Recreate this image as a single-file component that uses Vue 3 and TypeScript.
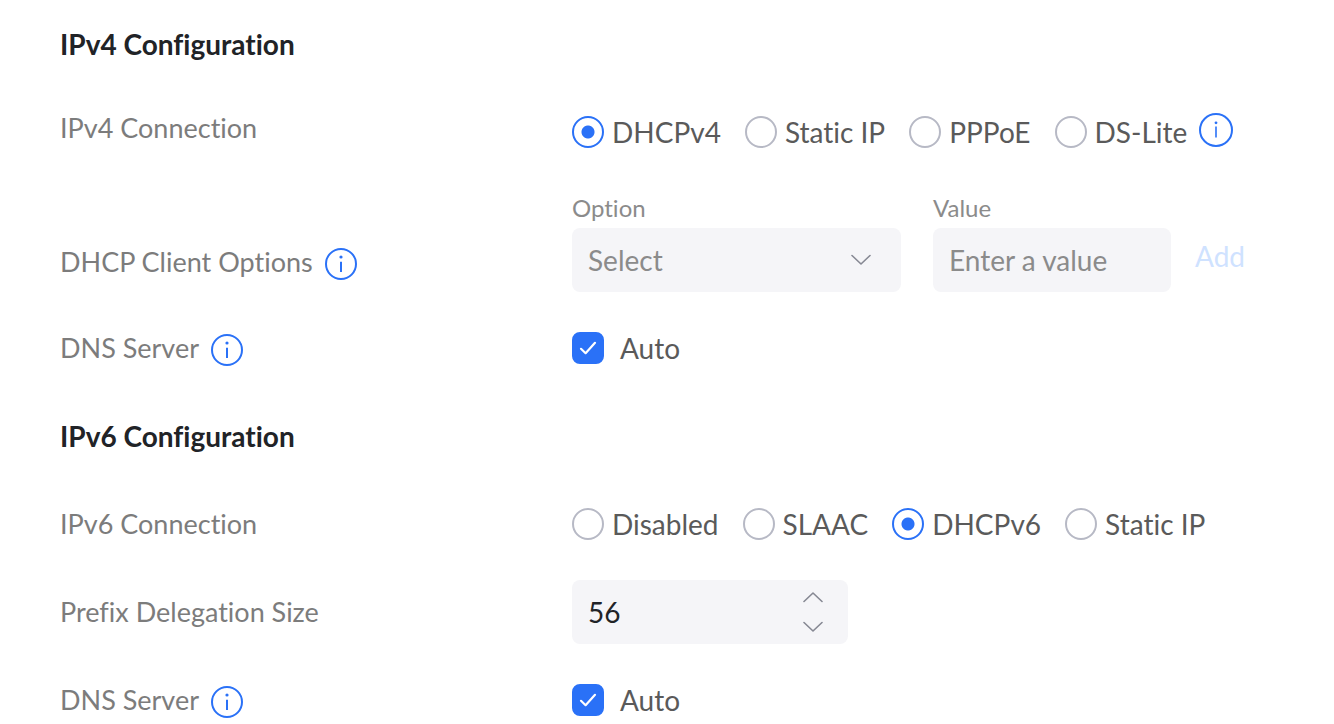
<script setup lang="ts">
import { ref } from 'vue'

const v4Modes: string[] = ['DHCPv4', 'Static IP', 'PPPoE', 'DS-Lite']
const v6Modes: string[] = ['Disabled', 'SLAAC', 'DHCPv6', 'Static IP']

const v4Mode = ref('DHCPv4')
const v6Mode = ref('DHCPv6')
const v4AutoDns = ref(true)
const v6AutoDns = ref(true)
const option = ref('')
const optionValue = ref('')
const prefixSize = ref(56)

function step(amount: number): void {
  prefixSize.value = Math.min(64, Math.max(48, prefixSize.value + amount))
}
</script>

<template>
  <form class="page" @submit.prevent>
    <section class="section">
      <h2 class="title">IPv4 Configuration</h2>

      <div class="row" role="radiogroup" aria-labelledby="v4-connection">
        <span id="v4-connection" class="label raised">IPv4 Connection</span>
        <div class="choices">
          <label v-for="mode in v4Modes" :key="mode" class="choice">
            <input v-model="v4Mode" class="radio" type="radio" name="v4" :value="mode" />
            {{ mode }}
          </label>
          <button class="info info-large" type="button" aria-label="About DS-Lite">
            <svg viewBox="0 0 34 34" aria-hidden="true">
              <circle cx="17" cy="17" r="16" />
              <path class="thin" d="M17 13.5V24.5" />
              <circle class="dot" cx="17" cy="9.8" r="1.4" />
            </svg>
          </button>
        </div>
      </div>

      <div class="row row-options">
        <div class="label label-options">
          <span>DHCP Client Options</span>
          <button class="info" type="button" aria-label="About DHCP client options">
            <svg viewBox="0 0 32 32" aria-hidden="true">
              <circle cx="16" cy="16" r="15" />
              <path d="M16 13.8V24" />
              <circle class="dot" cx="16" cy="9" r="1.6" />
            </svg>
          </button>
        </div>
        <div class="options">
          <div class="option-field">
            <label class="caption" for="option">Option</label>
            <div class="stack">
              <select id="option" v-model="option" class="field select">
                <option value="">Select</option>
                <option value="60">60</option>
                <option value="61">61</option>
              </select>
              <svg class="chevron" viewBox="0 0 20 12" aria-hidden="true">
                <path d="M1 1.5L10 10L19 1.5" />
              </svg>
            </div>
          </div>
          <div class="value-field">
            <label class="caption" for="value">Value</label>
            <input id="value" v-model="optionValue" class="field" type="text" placeholder="Enter a value" />
          </div>
          <button class="add" type="button" disabled>Add</button>
        </div>
      </div>

      <div class="row row-dns">
        <div class="label">
          <span>DNS Server</span>
          <button class="info" type="button" aria-label="About the IPv4 DNS server">
            <svg viewBox="0 0 32 32" aria-hidden="true">
              <circle cx="16" cy="16" r="15" />
              <path d="M16 13.8V24" />
              <circle class="dot" cx="16" cy="9" r="1.6" />
            </svg>
          </button>
        </div>
        <label class="check">
          <span class="stack">
            <input v-model="v4AutoDns" class="box" type="checkbox" />
            <svg v-if="v4AutoDns" class="tick" viewBox="0 0 32 32" aria-hidden="true">
              <path d="M9 16.8L13.6 21.2L23 10.8" />
            </svg>
          </span>
          Auto
        </label>
      </div>
    </section>

    <section class="section">
      <h2 class="title">IPv6 Configuration</h2>

      <div class="row" role="radiogroup" aria-labelledby="v6-connection">
        <span id="v6-connection" class="label">IPv6 Connection</span>
        <div class="choices">
          <label v-for="mode in v6Modes" :key="mode" class="choice">
            <input v-model="v6Mode" class="radio" type="radio" name="v6" :value="mode" />
            {{ mode }}
          </label>
        </div>
      </div>

      <div class="row row-prefix">
        <label class="label" for="prefix">Prefix Delegation Size</label>
        <div class="stack number">
          <input id="prefix" v-model.number="prefixSize" class="field" type="number" min="48" max="64" />
          <div class="steppers">
            <button type="button" aria-label="Increase" @click="step(1)">
              <svg viewBox="0 0 20 12" aria-hidden="true"><path d="M1 10.5L10 2L19 10.5" /></svg>
            </button>
            <button type="button" aria-label="Decrease" @click="step(-1)">
              <svg viewBox="0 0 20 12" aria-hidden="true"><path d="M1 1.5L10 10L19 1.5" /></svg>
            </button>
          </div>
        </div>
      </div>

      <div class="row row-dns">
        <div class="label">
          <span>DNS Server</span>
          <button class="info" type="button" aria-label="About the IPv6 DNS server">
            <svg viewBox="0 0 32 32" aria-hidden="true">
              <circle cx="16" cy="16" r="15" />
              <path d="M16 13.8V24" />
              <circle class="dot" cx="16" cy="9" r="1.6" />
            </svg>
          </button>
        </div>
        <label class="check">
          <span class="stack">
            <input v-model="v6AutoDns" class="box" type="checkbox" />
            <svg v-if="v6AutoDns" class="tick" viewBox="0 0 32 32" aria-hidden="true">
              <path d="M9 16.8L13.6 21.2L23 10.8" />
            </svg>
          </span>
          Auto
        </label>
      </div>
    </section>
  </form>
</template>

<style>
body {
  margin: 0;
  background: #fff;
}
</style>

<style scoped>
.page {
  display: flex;
  flex-direction: column;
  gap: 54px;
  padding: 28px 60px 6px;
  color: #5a5a5a;
  font-family: Lato, "Open Sans", sans-serif;
  font-size: 28px;
  font-variant-ligatures: none;
  line-height: 32px;
}
.page * {
  box-sizing: border-box;
}
.title {
  margin: 0 0 56px;
  color: #212327;
  font-size: 28px;
  font-weight: 700;
  line-height: 32px;
}
.row {
  display: grid;
  grid-template-columns: 512px minmax(0, 1fr);
  align-items: center;
}
.row-options {
  margin-top: 48px;
}
.row-dns,
.row-prefix {
  margin-top: 40px;
}
.row-dns {
  align-items: start;
}
.label {
  display: flex;
  align-items: flex-start;
  gap: 12px;
  color: #7c7c7c;
  font-size: 27px;
}
.raised {
  align-self: start;
  line-height: 24px;
}
.label-options {
  align-self: end;
  padding-bottom: 12px;
}
.choices {
  display: flex;
  align-items: center;
  height: 32px;
  white-space: nowrap;
}
.choice {
  display: flex;
  align-items: center;
  gap: 8px;
  margin-right: 24px;
}
.choice:has(+ .info) {
  margin-right: 12px;
}
.radio {
  flex: none;
  width: 32px;
  height: 32px;
  margin: 0;
  appearance: none;
  border: 2px solid #b7b9c5;
  border-radius: 50%;
  background: #fff;
}
.radio:checked {
  border-color: #2a71f7;
  background: radial-gradient(circle, #2a71f7 6px, #fff 7px);
}
button {
  flex: none;
  padding: 0;
  border: 0;
  background: none;
  font: inherit;
  font-variant-ligatures: none;
}
svg {
  display: block;
  fill: none;
  stroke-linecap: round;
  stroke-linejoin: round;
}
.info {
  width: 32px;
  height: 32px;
}
.label .info {
  margin-top: 2px;
}
.info svg {
  stroke: #2a71f7;
  stroke-linecap: butt;
  stroke-width: 2;
}
.info .thin {
  stroke-width: 1.6;
}
.info .dot {
  fill: #2a71f7;
  stroke: none;
}
.info-large {
  width: 34px;
  height: 34px;
  margin-bottom: 4px;
}
.options {
  display: flex;
  align-items: flex-end;
}
.option-field {
  width: 329px;
  margin-right: 32px;
}
.value-field {
  width: 238px;
  margin-right: 24px;
}
.caption {
  display: block;
  margin-bottom: 8px;
  color: #8b8b8b;
  font-size: 24px;
  line-height: 24px;
}
.stack {
  display: grid;
  align-items: center;
}
.stack > * {
  grid-area: 1 / 1;
}
.field {
  display: block;
  width: 100%;
  height: 64px;
  margin: 0;
  padding: 0 16px;
  appearance: none;
  border: 0;
  border-radius: 8px;
  background: #f5f5f8;
  color: #212327;
  font: inherit;
}
.field::placeholder {
  color: #8b8b8b;
  opacity: 1;
}
.select {
  color: #8b8b8b;
}
.chevron {
  justify-self: end;
  width: 20px;
  height: 12px;
  margin-right: 30px;
  pointer-events: none;
}
.chevron,
.steppers svg {
  stroke: #868893;
  stroke-width: 1.6;
}
.add {
  margin-bottom: 20px;
  color: #cfe2ff;
}
.number {
  width: 276px;
}
.number .field {
  appearance: textfield;
}
.number .field::-webkit-inner-spin-button {
  appearance: none;
}
.steppers {
  display: flex;
  flex-direction: column;
  justify-self: end;
  gap: 18px;
  margin-right: 25px;
}
.steppers svg {
  width: 20px;
  height: 12px;
}
.check {
  display: flex;
  align-items: center;
  justify-self: start;
  gap: 16px;
}
.box {
  width: 32px;
  height: 32px;
  margin: 0;
  appearance: none;
  border: 2px solid #b7b9c5;
  border-radius: 8px;
}
.box:checked {
  border-color: #2a71f7;
  background: #2a71f7;
}
.tick {
  width: 32px;
  height: 32px;
  pointer-events: none;
  stroke: #fff;
  stroke-width: 2.2;
}
</style>
